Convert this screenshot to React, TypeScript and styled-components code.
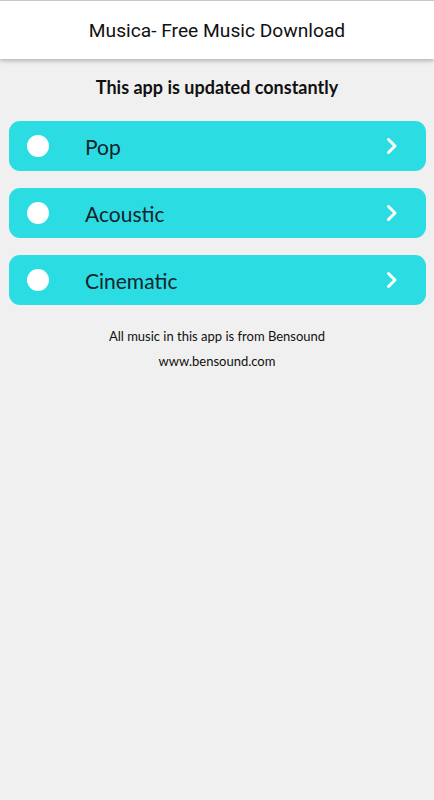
import React from "react";
import styled, { createGlobalStyle } from "styled-components";

const Global = createGlobalStyle`
  html, body { margin: 0; padding: 0; background: #f0f0f0; }
  body { font-family: Lato, "Open Sans", sans-serif; }
`;

const Page = styled.div`
  width: 434px;
  min-height: 800px;
  background: #f0f0f0;
  display: flex;
  flex-direction: column;
`;

const Header = styled.header`
  height: 58px;
  background: #ffffff;
  border-top: 1px solid #c8c8c8;
  box-shadow: 0 2px 4px rgba(0, 0, 0, 0.25);
  display: flex;
  align-items: center;
  justify-content: center;
  font-family: Roboto, "Liberation Sans", sans-serif;
  font-size: 19.2px;
  color: #111;
`;

const Subtitle = styled.div`
  margin-top: 16px;
  text-align: center;
  font-size: 18px;
  font-weight: 700;
  color: #111;
  line-height: 24px;
`;

const List = styled.div`
  margin: 22px 8px 0 9px;
  display: flex;
  flex-direction: column;
  gap: 17px;
`;

const Row = styled.div`
  height: 50px;
  border-radius: 11px;
  background: #2cdce3;
  display: flex;
  align-items: center;
  padding: 0 28px 0 18px;
`;

const Dot = styled.span`
  width: 22px;
  height: 22px;
  border-radius: 50%;
  background: #ffffff;
  flex: none;
`;

const Label = styled.span`
  margin-left: 36px;
  flex: 1;
  font-size: 21px;
  color: #14242a;
`;

const Chevron = styled.svg`
  width: 12px;
  height: 18px;
  flex: none;
`;

const Footer = styled.div`
  margin-top: 19px;
  text-align: center;
  font-size: 13px;
  color: #111;
  line-height: 25px;
`;

const items = ["Pop", "Acoustic", "Cinematic"];

export default function App() {
  return (
    <Page>
      <Global />
      <Header>Musica- Free Music Download</Header>
      <Subtitle>This app is updated constantly</Subtitle>
      <List>
        {items.map((t) => (
          <Row key={t}>
            <Dot />
            <Label>{t}</Label>
            <Chevron viewBox="0 0 12 18">
              <path d="M2.5 2.5 L9 9 L2.5 15.5" fill="none" stroke="#fff" strokeWidth="3" strokeLinecap="round" strokeLinejoin="round" />
            </Chevron>
          </Row>
        ))}
      </List>
      <Footer>
        <div>All music in this app is from Bensound</div>
        <div>www.bensound.com</div>
      </Footer>
    </Page>
  );
}
